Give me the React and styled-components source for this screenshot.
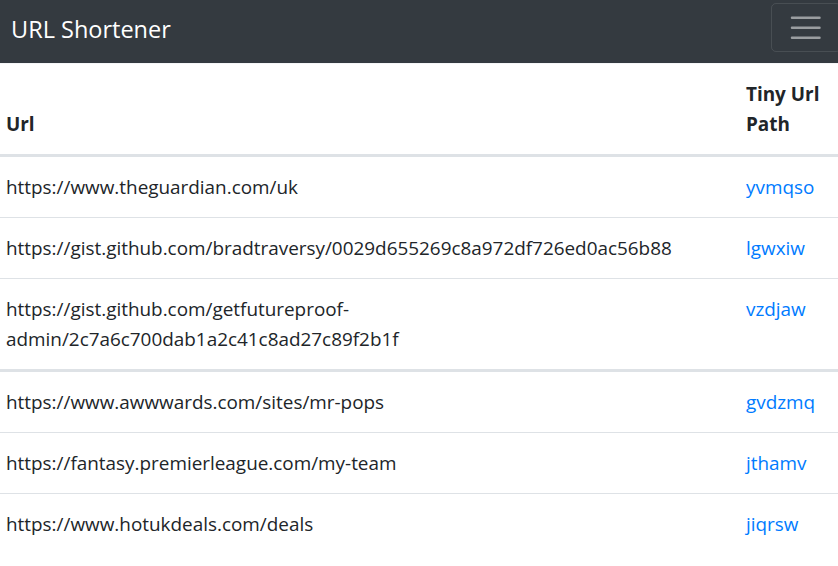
import React from 'react';
import styled, { createGlobalStyle } from 'styled-components';

const GlobalStyle = createGlobalStyle`
  html, body {
    margin: 0;
    padding: 0;
    background: #fff;
    overflow: hidden;
  }
  body {
    font-family: "Open Sans", "Noto Sans", sans-serif;
    color: #212529;
  }
`;

const Navbar = styled.nav`
  display: flex;
  align-items: flex-start;
  justify-content: space-between;
  height: 63px;
  padding-left: 11px;
  background-color: #343a40;
  overflow: hidden;
`;

const Brand = styled.a`
  color: #fff;
  font-size: 23.5px;
  line-height: 37px;
  margin-top: 11px;
  text-decoration: none;
  white-space: nowrap;
`;

const Toggler = styled.button`
  flex: none;
  width: 70px;
  height: 49px;
  margin-top: 3px;
  margin-right: -3px;
  padding: 0 15px;
  display: flex;
  align-items: center;
  background: transparent;
  border: 1px solid rgba(255, 255, 255, 0.1);
  border-radius: 5px;
  cursor: pointer;
`;

const Table = styled.table`
  width: 100%;
  table-layout: fixed;
  border-collapse: collapse;
  font-size: 18.9px;
  line-height: 30px;
  color: #212529;

  & tbody + tbody {
    border-top: 3px solid #dee2e6;
  }
`;

const Th = styled.th`
  text-align: left;
  vertical-align: bottom;
  font-weight: 700;
  padding: 15px ${(p) => (p.$first ? '15px' : '0')} 15px ${(p) => (p.$first ? '6px' : '15px')};
  border-top: 1px solid #f4f5f7;
  border-bottom: 3px solid #dee2e6;
`;

const Td = styled.td`
  vertical-align: top;
  padding: 15px ${(p) => (p.$first ? '15px' : '0')} 15px ${(p) => (p.$first ? '6px' : '15px')};
  border-top: 1px solid #dee2e6;
  overflow-wrap: break-word;
`;

const TinyLink = styled.a`
  color: #007bff;
  text-decoration: none;
`;

const groups = [
  [
    { url: 'https://www.theguardian.com/uk', tiny: 'yvmqso' },
    { url: 'https://gist.github.com/bradtraversy/0029d655269c8a972df726ed0ac56b88', tiny: 'lgwxiw' },
    { url: 'https://gist.github.com/getfutureproof-admin/2c7a6c700dab1a2c41c8ad27c89f2b1f', tiny: 'vzdjaw' },
  ],
  [
    { url: 'https://www.awwwards.com/sites/mr-pops', tiny: 'gvdzmq' },
    { url: 'https://fantasy.premierleague.com/my-team', tiny: 'jthamv' },
    { url: 'https://www.hotukdeals.com/deals', tiny: 'jiqrsw' },
  ],
];

const TogglerIcon = () => (
  <svg width="37.5" height="37.5" viewBox="0 0 30 30">
    <path
      stroke="rgba(255,255,255,0.5)"
      strokeWidth="2"
      strokeLinecap="round"
      strokeMiterlimit="10"
      d="M4 7h22M4 15h22M4 23h22"
    />
  </svg>
);

const App = () => {
  return (
    <>
      <GlobalStyle />
      <Navbar>
        <Brand href="#">URL Shortener</Brand>
        <Toggler aria-label="Toggle navigation">
          <TogglerIcon />
        </Toggler>
      </Navbar>
      <Table>
        <colgroup>
          <col style={{ width: 731 }} />
          <col />
        </colgroup>
        <thead>
          <tr>
            <Th $first>Url</Th>
            <Th>Tiny Url Path</Th>
          </tr>
        </thead>
        {groups.map((rows, i) => (
          <tbody key={i}>
            {rows.map((row) => (
              <tr key={row.tiny}>
                <Td $first>{row.url}</Td>
                <Td>
                  <TinyLink href="#">{row.tiny}</TinyLink>
                </Td>
              </tr>
            ))}
          </tbody>
        ))}
      </Table>
    </>
  );
};

export default App;
